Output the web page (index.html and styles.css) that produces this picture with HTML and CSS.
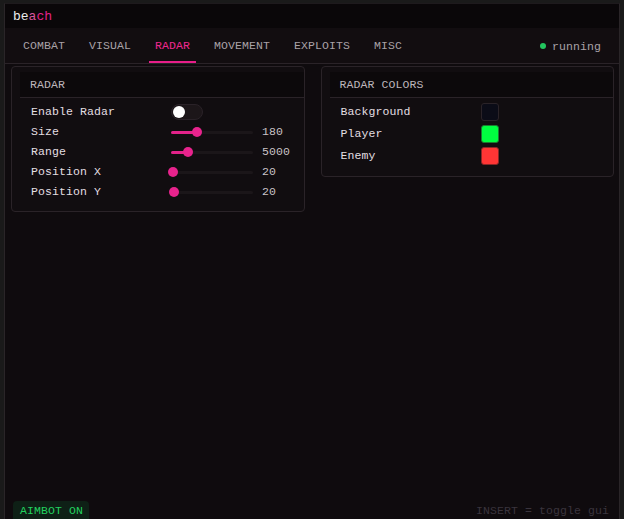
FILE: index.html
```html
<!DOCTYPE html>
<html lang="en">
<head>
    <meta charset="UTF-8">
    <meta name="viewport" content="width=device-width, initial-scale=1.0">
    <title>beach</title>
    <link rel="stylesheet" href="styles.css">
</head>
<body>
<div class="window">
    <div class="title-bar">
        <span class="t-white">be</span><span class="t-light">a</span><span class="t-pink">ch</span>
    </div>

    <div class="tab-bar">
        <div class="tabs">
            <div class="tab">COMBAT</div>
            <div class="tab">VISUAL</div>
            <div class="tab active">RADAR</div>
            <div class="tab">MOVEMENT</div>
            <div class="tab">EXPLOITS</div>
            <div class="tab">MISC</div>
        </div>
        <div class="status"><span class="dot"></span>running</div>
    </div>

    <div class="content">
        <div class="card">
            <div class="card-header">RADAR</div>
            <div class="card-body">
                <div class="row">
                    <span class="label">Enable Radar</span>
                    <div class="toggle"><span class="knob"></span></div>
                </div>
                <div class="row">
                    <span class="label">Size</span>
                    <div class="slider">
                        <div class="fill" style="width: 26px;"></div>
                        <span class="thumb" style="left: 26px;"></span>
                    </div>
                    <span class="value">180</span>
                </div>
                <div class="row">
                    <span class="label">Range</span>
                    <div class="slider">
                        <div class="fill" style="width: 17px;"></div>
                        <span class="thumb" style="left: 17px;"></span>
                    </div>
                    <span class="value">5000</span>
                </div>
                <div class="row">
                    <span class="label">Position X</span>
                    <div class="slider">
                        <div class="fill" style="width: 2px;"></div>
                        <span class="thumb" style="left: 2px;"></span>
                    </div>
                    <span class="value">20</span>
                </div>
                <div class="row">
                    <span class="label">Position Y</span>
                    <div class="slider">
                        <div class="fill" style="width: 3px;"></div>
                        <span class="thumb" style="left: 3px;"></span>
                    </div>
                    <span class="value">20</span>
                </div>
            </div>
        </div>

        <div class="card">
            <div class="card-header">RADAR COLORS</div>
            <div class="card-body colors">
                <div class="row">
                    <span class="label">Background</span>
                    <span class="swatch swatch-bg"></span>
                </div>
                <div class="row">
                    <span class="label">Player</span>
                    <span class="swatch swatch-player"></span>
                </div>
                <div class="row">
                    <span class="label">Enemy</span>
                    <span class="swatch swatch-enemy"></span>
                </div>
            </div>
        </div>
    </div>

    <div class="footer">
        <div class="badge">AIMBOT ON</div>
        <div class="hint">INSERT = toggle gui</div>
    </div>
</div>
</body>
</html>
```

FILE: styles.css
```css
* {
    box-sizing: border-box;
}

html, body {
    height: 100%;
}

body {
    margin: 0;
    padding: 3px 4px 0 4px;
    background-color: #1a1a1a;
    font-family: "Liberation Mono", "DejaVu Sans Mono", monospace;
    font-size: 11.5px;
    letter-spacing: 0.1px;
    color: #e3dfe2;
    overflow: hidden;
}

.window {
    width: 616px;
    height: 100%;
    display: flex;
    flex-direction: column;
    background-color: #0f0b0e;
    border-left: 1px solid #2a2528;
    border-right: 1px solid #2a2528;
    border-top: 1px solid #1e1a1d;
}

.title-bar {
    height: 24px;
    display: flex;
    align-items: center;
    padding-left: 8px;
    background-color: #0a0709;
    font-size: 13px;
    letter-spacing: 0;
}

.t-white {
    color: #ececec;
}

.t-light {
    color: #d8559d;
}

.t-pink {
    color: #e3228a;
}

.tab-bar {
    height: 36px;
    display: flex;
    align-items: stretch;
    justify-content: space-between;
    padding: 0 18px 0 12px;
    background-color: #120d10;
    border-bottom: 1px solid #2a2328;
}

.tabs {
    display: flex;
    gap: 12px;
}

.tab {
    display: flex;
    align-items: center;
    padding: 2px 6px 0 6px;
    color: #a9a2a7;
    border-bottom: 2px solid transparent;
}

.tab.active {
    color: #f0288f;
    border-bottom-color: #e81e8a;
}

.status {
    display: flex;
    align-items: center;
    gap: 6px;
    padding-top: 2px;
    color: #a9a2a7;
}

.dot {
    width: 6px;
    height: 6px;
    border-radius: 50%;
    background-color: #22c55e;
    margin-bottom: 2px;
}

.content {
    flex: 1;
    display: flex;
    align-items: flex-start;
    gap: 16px;
    padding: 2px 5px 0 6px;
}

.card {
    width: 294px;
    padding: 5px 0 10px 8px;
    border: 1px solid #2a2328;
    border-radius: 4px;
    background-color: #110d10;
}

.card-header {
    height: 26px;
    display: flex;
    align-items: center;
    padding-left: 10px;
    background-color: #0c090b;
    border-bottom: 1px solid #2a2328;
    color: #bdb6bb;
}

.card-body {
    display: flex;
    flex-direction: column;
    padding: 3px 0 0 2px;
}

.row {
    height: 20px;
    display: flex;
    align-items: center;
}

.colors {
    padding-top: 2px;
}

.colors .row {
    height: 22px;
}

.label {
    width: 149px;
    padding-left: 9px;
}

.toggle {
    width: 32px;
    height: 16px;
    margin-top: 1px;
    border-radius: 8px;
    background-color: #1c1619;
    border: 1px solid #2a2228;
    display: flex;
    align-items: center;
    padding-left: 1px;
}

.knob {
    width: 12px;
    height: 12px;
    border-radius: 50%;
    background-color: #ffffff;
}

.slider {
    position: relative;
    width: 82px;
    height: 3px;
    margin-top: 2px;
    background-color: #1b1619;
    border-radius: 2px;
}

.fill {
    height: 100%;
    background-color: #e3228a;
    border-radius: 2px;
}

.thumb {
    position: absolute;
    top: -4px;
    width: 10px;
    height: 10px;
    margin-left: -5px;
    border-radius: 50%;
    background-color: #e8238d;
}

.value {
    margin-left: 9px;
    color: #c9c3c7;
}

.swatch {
    width: 18px;
    height: 18px;
    margin-top: 2px;
    border-radius: 3px;
}

.swatch-bg {
    background-color: #0b0c17;
    border: 1px solid #2a2328;
}

.swatch-player {
    background-color: #00ff40;
    border: 1px solid #1c7a30;
}

.swatch-enemy {
    background-color: #ff3535;
    border: 1px solid #8a2626;
}

.footer {
    height: 18px;
    display: flex;
    justify-content: space-between;
    align-items: flex-end;
    padding: 0 10px 0 8px;
}

.badge {
    height: 18px;
    display: flex;
    align-items: center;
    padding: 0 6px 0 7px;
    background-color: #0e2016;
    border-radius: 4px 4px 0 0;
    color: #22d05f;
}

.hint {
    height: 18px;
    display: flex;
    align-items: center;
    color: #3a343d;
}
```
